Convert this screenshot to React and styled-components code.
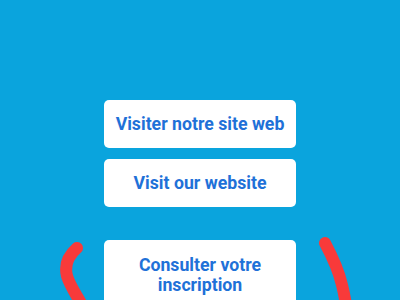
import React from 'react';
import styled, { createGlobalStyle } from 'styled-components';

const GlobalStyle = createGlobalStyle`
  html, body {
    margin: 0;
    padding: 0;
    background: #0aa4dd;
  }
`;

const Screen = styled.div`
  position: relative;
  width: 400px;
  height: 300px;
  overflow: hidden;
  background: #0aa4dd;
  font-family: Roboto, "Liberation Sans", sans-serif;
`;

const Menu = styled.div`
  display: flex;
  flex-direction: column;
  align-items: center;
  padding-top: 100px;
`;

const LinkButton = styled.button`
  width: 192px;
  min-height: 48px;
  margin-top: ${props => props.$spaced ? '33px' : '11px'};
  padding: ${props => props.$tall ? '15px 16px' : '0 6px'};
  border: none;
  border-radius: 5px;
  background: #ffffff;
  color: #1f71d8;
  font-family: inherit;
  font-size: 17.7px;
  font-weight: 700;
  line-height: 20px;
  text-align: center;

  &:first-child {
    margin-top: 0;
  }
`;

const Scribble = styled.svg`
  position: absolute;
  left: 0;
  top: 0;
  pointer-events: none;
`;

export default function App() {
  return (
    <>
      <GlobalStyle />
      <Screen>
        <Menu>
          <LinkButton>Visiter notre site web</LinkButton>
          <LinkButton>Visit our website</LinkButton>
          <LinkButton $spaced $tall>Consulter votre inscription</LinkButton>
        </Menu>
        <Scribble width="400" height="300" viewBox="0 0 400 300">
          <g fill="none" stroke="#f83a3a" strokeWidth="12" strokeLinecap="round">
            <path d="M77 248 C69 255 64 264 67 276 C70 286 76 294 82 305" />
            <path d="M325 243 C333 258 339 272 342 285 C344 293 345 298 346 305" />
          </g>
        </Scribble>
      </Screen>
    </>
  );
}
